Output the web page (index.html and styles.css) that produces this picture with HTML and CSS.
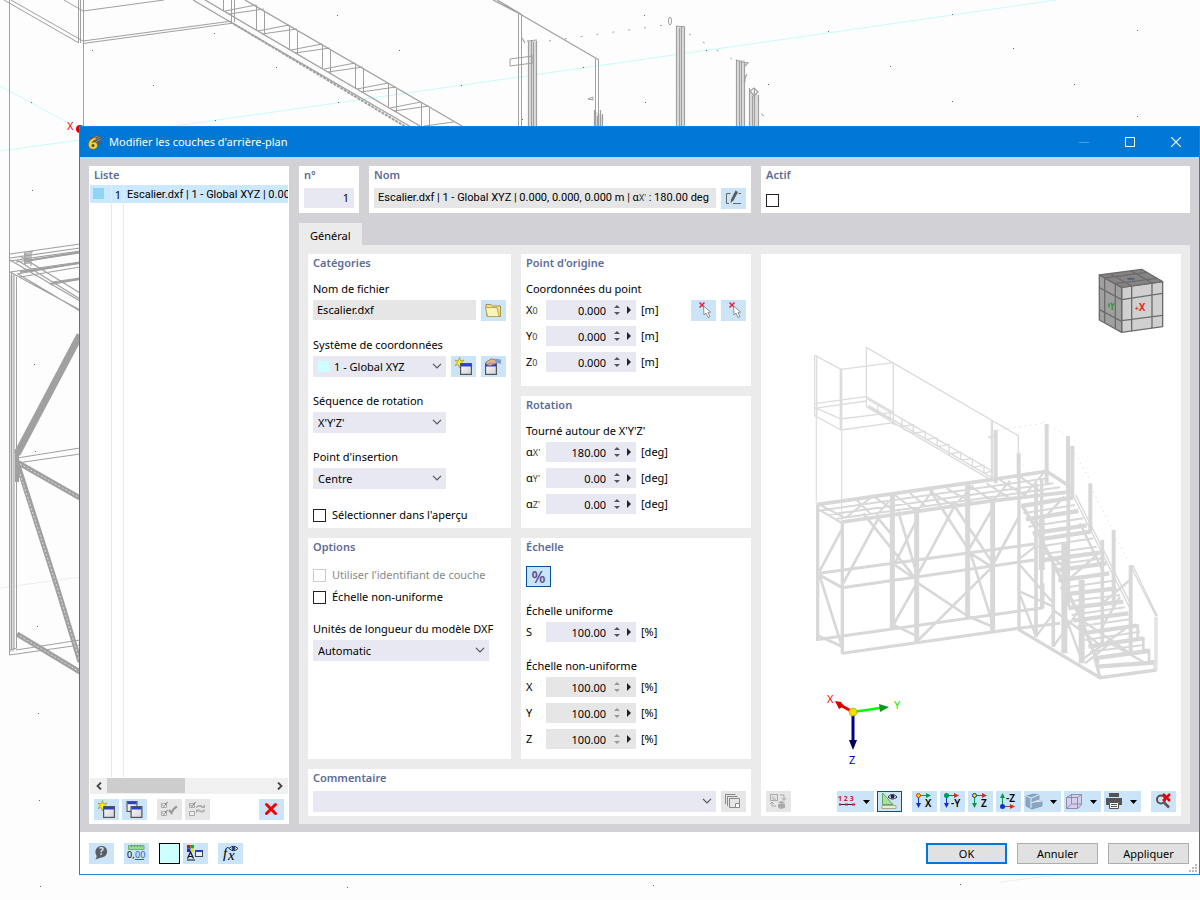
FILE: index.html
```html
<!DOCTYPE html>
<html lang="fr">
<head>
<meta charset="utf-8">
<title>Modifier les couches d'arrière-plan</title>
<link rel="stylesheet" href="styles.css">
</head>
<body>
<svg class="defs" aria-hidden="true">
  <defs>
    <linearGradient id="g-win" x1="0" y1="0" x2="1" y2="1"><stop offset="0" stop-color="#fff"/><stop offset="1" stop-color="#d0d0d6"/></linearGradient>
    <symbol id="chev" viewBox="0 0 10 6"><path d="M1 .8L5 4.8L9 .8" fill="none" stroke="#555" stroke-width="1.2"/></symbol>
    <symbol id="down" viewBox="0 0 7 4"><path d="M0 0H7L3.500 4Z"/></symbol>
    <symbol id="win" viewBox="0 0 12 12"><rect x=".6" y=".6" width="10.800" height="10.800" fill="url(#g-win)" stroke="#555" stroke-width="1.200"/><path d="M1 1H11V3.500H1Z" fill="#2a3fd8"/></symbol>
    <symbol id="i-new" viewBox="0 0 25 21"><path d="M8.500 1.500L9.700 5L13 4L10.800 6.800L13 9.500L9.700 8.600L8.500 12L7.300 8.600L4 9.500L6.200 6.800L4 4L7.300 5Z" fill="#ffee10" stroke="#8a8a30" stroke-width=".6"/><use href="#win" x="9" y="7" width="12" height="12"/></symbol>
    <symbol id="i-copywin" viewBox="0 0 25 21"><use href="#win" x="4" y="2" width="12" height="11"/><use href="#win" x="8" y="7" width="13" height="12"/></symbol>
    <symbol id="i-pick" viewBox="0 0 25 21"><path d="M8.500 2.500L13.500 7.500M13.500 2.500L8.500 7.500" stroke="#e8203a" stroke-width="1.500"/><path d="M12.500 6L13 15L15 13L17 17.500L19 16.500L17 12.500L19.500 12Z" fill="#fff" stroke="#777" stroke-width=".8"/></symbol>
    <g id="baluster"><path d="M223.500 -14V11M231.500 -8V15M192 -8L223 -14M196 -5L231 -10"/></g>
  </defs>
</svg>

<main class="desktop">
  <svg class="scene" viewBox="0 0 1200 900" preserveAspectRatio="xMinYMin slice" aria-hidden="true">
    <g fill="none" stroke="#c8fbfb"><path d="M0 86L76 127M0 151L80 140M175 126L400 94L800 37L1056 0"/></g>
    <path d="M0 588L80 577M1000 882L1060 875" stroke="#eee"/>
    <path d="M528 41H537V126H528ZM676 26H685V126H676ZM736 60H745V126H736ZM750 90L758 95V126H750ZM594 110L602 116V126H594ZM10 275H14V652H10Z" fill="#dedede"/>
    <g fill="none" stroke="#a0a0a0">
      <path d="M9.500 0V655M4 0L79 43M11 0L83 41M64 0L83 11L164 0M83 41L232 21M83 43.500L234 23M78.500 0V43M80.500 0V43M83.500 0V126"/>
      <path d="M193 0L232 23L411 127M205 0L420 126M245 0L462 126" stroke-width="1.300"/>
      <path d="M234 24L406 127" stroke-dasharray="3 1" stroke-width="2"/>
      <path d="M223.500 0V11M231.500 0V22M234.500 0V22"/>
      <use href="#baluster" x="33" y="19"/><use href="#baluster" x="66" y="39"/><use href="#baluster" x="99" y="58"/><use href="#baluster" x="132" y="77"/><use href="#baluster" x="165" y="97"/><use href="#baluster" x="198" y="116"/><path d="M424 126L454 122"/>
      <path d="M493 0L520 14L599 60M497 0L521 14" stroke-width="1.300"/>
      <path d="M518.500 14V126M521.500 14V126M595.500 59V126M598.500 60V126"/>
      <path d="M510 59L533 56V63L510 66ZM588 99L593 97V100Z"/>
      <path d="M528.500 41V126M531.500 40V126M533.500 42V126M536.500 41V126M527 41L537 40M676.500 26V126M679.500 28V126M681.500 26V126M684.500 27V126M676 26L685 27M736.500 60V126M739.500 62V126M741.500 61V126M744.500 62V126M736 60L742 62L748 63L744 67M749.500 88V126M752.500 96V126M754.500 88V126M758.500 95V126M750 91L754 96L758 92L754 88ZM594.500 110V126M597.500 116V126M600.500 110V126M602.500 114V126M522 38L525 43" stroke-width="1.200"/>
      <ellipse cx="670" cy="21" rx="1.500" ry="4"/><path d="M745 75V82M747 74L744 81M761 114L764 116"/>
      <path d="M549 41L665 25M689 34L732 59" stroke-dasharray="2 14"/>
      <g stroke-width="1.200"><path d="M10 254L80 244M10 258L80 248M10 261L80 251M16 262L80 253M10 272L80 262M17 274L80 263M20 277L80 267M10 272L80 310M18 274L80 311M10 260L80 301M17 260L80 299M20 256L80 293M50 284L80 279M52 282L80 278M24 252H33M25 252V265M31 252V266"/></g>
      <path d="M20 272L80 263M50 284L80 279M26 261L80 252" stroke-width="2"/>
      <path d="M27 253V264" stroke-width="6" stroke-opacity=".7"/>
      <path d="M11.500 272V650M14 275V650M16.500 277V648M9.500 655L80 645M16 650L80 640M17 458L80 448M17 463L80 454M10 650L17 648"/>
      <path d="M17 454L80 335" stroke-width="7"/>
      <g stroke-width="5" stroke="#a0a0a0"><path d="M17 462L80 498M17 462L58 590L80 662M17 634L80 672"/></g>
      <g stroke="#ddd" stroke-dasharray="2 2"><path d="M20 464L80 498M20 474L58 590L80 662M20 636L80 672"/></g>
      <path d="M17 449V482" stroke-width="4"/>
    </g>
    <g fill="#666"><path d="M92 50h1v1h-1zM31 102h1v1h-1zM214 33h1v1h-1zM153 85h1v1h-1zM276 67h1v1h-1zM337 15h1v1h-1zM338 102h1v1h-1zM215 120h1v1h-1zM32 190h1v1h-1zM399 50h1v1h-1zM461 85h1v1h-1zM583 67h1v1h-1zM644 15h1v1h-1zM706 50h1v1h-1zM645 102h1v1h-1zM522 119h1v1h-1zM768 84h1v1h-1zM828 31h1v1h-1zM890 66h1v1h-1zM952 14h1v1h-1zM952 101h1v1h-1zM1013 48h1v1h-1zM1074 84h1v1h-1zM1137 30h1v1h-1zM1137 116h1v1h-1zM34 364h1v1h-1zM35 451h1v1h-1zM37 626h1v1h-1zM38 713h1v1h-1zM39 800h1v1h-1zM40 886h1v1h-1zM347 887h1v1h-1zM653 885h1v1h-1zM960 884h1v1h-1z"/></g>
    <text x="67" y="130" class="axis" fill="#f00">X</text><circle cx="80" cy="129" r="4" fill="#d00"/>
  </svg>

  <section class="dialog" role="dialog" aria-labelledby="dlg-title">
    <header class="titlebar">
      <svg class="logo" viewBox="0 0 16 16"><path d="M3 4L9 1L15 3L13 12L8 8L3 6Z" fill="#555a66"/><path d="M6 4L11 2M8 6L13 3M9 8L14 5" stroke="#9ab" stroke-width=".7"/><path d="M9 3.500C3 4.500 1.500 8 1.500 11C1.500 16.500 10.500 16.500 10.500 11.500C10.500 8 7 7 5 8.800C5.500 7 7 6 9 5.800Z" fill="#ffd22e" stroke="#7a5c10" stroke-width=".5"/><circle cx="6" cy="11.500" r="1.500" fill="#4a4a40"/></svg>
      <h1 id="dlg-title">Modifier les couches d'arrière-plan</h1>
      <div class="winbtns">
        <button aria-label="Réduire" disabled><svg viewBox="0 0 10 10"><path d="M0 5.500H10" stroke="#4b9fe2"/></svg></button>
        <button aria-label="Agrandir"><svg viewBox="0 0 10 10"><path d="M.5 .5H9.500V9.500H.5Z" fill="none" stroke="#fff"/></svg></button>
        <button aria-label="Fermer"><svg viewBox="0 0 10 10"><path d="M0 0L10 10M10 0L0 10" stroke="#fff" stroke-width="1.200"/></svg></button>
      </div>
    </header>

    <div class="body">
      <aside class="panel list">
        <h2>Liste</h2>
        <ul class="rows">
          <li class="row"><span class="cell-sw"><i></i></span><span class="cell-no">1</span><span class="cell-name">Escalier.dxf | 1 - Global XYZ | 0.000, 0.000, 0.000 m</span></li>
          <li class="row rest"><span class="cell-sw"></span><span class="cell-no"></span><span class="cell-name"></span></li>
        </ul>
        <div class="scroll">
          <button aria-label="Défiler à gauche"><svg viewBox="0 0 8 8"><path d="M6 .5L2.500 4L6 7.500" fill="none" stroke="#444" stroke-width="1.800"/></svg></button>
          <div class="track"><div class="thumb"></div></div>
          <button aria-label="Défiler à droite"><svg viewBox="0 0 8 8"><path d="M2 .5L5.500 4L2 7.500" fill="none" stroke="#444" stroke-width="1.800"/></svg></button>
        </div>
        <div class="tools">
          <button class="ib" aria-label="Nouveau"><svg><use href="#i-new"/></svg></button>
          <button class="ib" aria-label="Copier"><svg><use href="#i-copywin"/></svg></button>
          <button class="ib off lead" aria-label="Tout sélectionner" disabled><svg viewBox="0 0 25 21"><path d="M4.500 4.500H9.500V8.500H4.500ZM4.500 12.500H9.500V16.500H4.500Z" fill="#fff" stroke="#aaa"/><path d="M5 5.500L7 7.500L10.500 3M5 13.500L7 15.500L10.500 11" fill="none" stroke="#777"/><path d="M12 11L14.500 14Q16 9.500 20 7.500" fill="none" stroke="#999" stroke-width="2"/></svg></button>
          <button class="ib off" aria-label="Inverser la sélection" disabled><svg viewBox="0 0 25 21"><path d="M4.500 4.500H9.500V8.500H4.500ZM4.500 12.500H9.500V16.500H4.500Z" fill="#eee" stroke="#aaa"/><path d="M5 5.500L7 7.500L10.500 3" fill="none" stroke="#777"/><path d="M11 8.500Q14 5.500 17.500 8M20 11Q17 14 13.500 11.500" fill="none" stroke="#aaa" stroke-width="1.500"/><path d="M16 9L20 9V5.500ZM11 10.500L15 10.500L11 14Z" fill="#aaa"/></svg></button>
          <button class="ib del" aria-label="Supprimer"><svg viewBox="0 0 25 21"><path d="M7.500 5.500L16.500 14.500M16.500 5.500L7.500 14.500" stroke="#f00000" stroke-width="3" stroke-linecap="round"/></svg></button>
        </div>
      </aside>

      <div class="content">
        <div class="head">
          <section class="panel"><h2><label for="no">n°</label></h2><input id="no" class="field num-no" value="1"></section>
          <section class="panel"><h2>Nom</h2>
            <div class="line"><output class="field ro">Escalier.dxf | 1 - Global XYZ | 0.000, 0.000, 0.000 m | α<small>X'</small> : 180.00 deg</output>
            <button class="ib" aria-label="Modifier le nom"><svg viewBox="0 0 25 21"><path d="M9.500 5.500H5.500V15.500H8M17.500 5.500H20M12 15.500H20" fill="none" stroke="#666"/><path d="M9.500 15L10 11.500L14.500 2.500L17 4L12.500 12.500Z" fill="#5a5a5a"/></svg></button></div>
          </section>
          <section class="panel"><h2><label for="actif">Actif</label></h2><input type="checkbox" id="actif"></section>
        </div>
        <nav class="tabs"><button class="tab" aria-current="page">Général</button></nav>

        <div class="page">
          <section class="panel cat">
            <h2>Catégories</h2>
            <div class="stack">
              <div class="fg"><label for="file">Nom de fichier</label>
                <div class="line"><input id="file" class="field ro" value="Escalier.dxf" readonly>
                <button class="ib" aria-label="Parcourir"><svg viewBox="0 0 25 21"><path d="M5 7V4.500H10L11.500 6H19.500V16.500H6Z" fill="#efe08c" stroke="#a89440"/><path d="M4.500 7.500H16L18 16.500H6.500Z" fill="#fbf3bb" stroke="#b8a650"/></svg></button></div></div>
              <div class="fg"><label for="cs">Système de coordonnées</label>
                <div class="line"><div class="sel w133 sw"><i></i><select id="cs"><option>1 - Global XYZ</option></select><svg><use href="#chev"/></svg></div>
                <button class="ib" aria-label="Nouveau système"><svg><use href="#i-new"/></svg></button>
                <button class="ib end" aria-label="Modifier le système"><svg viewBox="0 0 25 21"><use href="#win" x="4" y="7" width="12" height="12"/><path d="M5 6L10 3L14 3.500L16 7L12 8.500L9 10L5 8Z" fill="#d8b49a" stroke="#8d6c58" stroke-width=".8"/><path d="M7 8.500L10 6.500M9.500 9L12 6.500" stroke="#8d6c58" stroke-width=".6"/><path d="M14 2.500L20 3.500V8L15 6.500Z" fill="#7f9fd0"/></svg></button></div></div>
              <div class="fg"><label for="seq">Séquence de rotation</label>
                <div class="sel w133"><select id="seq"><option>X'Y'Z'</option></select><svg><use href="#chev"/></svg></div></div>
              <div class="fg"><label for="ins">Point d'insertion</label>
                <div class="sel w133"><select id="ins"><option>Centre</option></select><svg><use href="#chev"/></svg></div></div>
              <label class="ck"><input type="checkbox">Sélectionner dans l'aperçu</label>
            </div>
          </section>

          <div class="mid">
            <section class="panel grow">
              <h2>Point d'origine</h2>
              <div class="origin">
              <div class="fg"><span>Coordonnées du point</span>
                <div class="nums">
                  <div class="nr"><label for="x0">X<small>0</small></label><div class="num"><input id="x0" value="0.000"><span class="spin"><button aria-label="Plus"></button><button aria-label="Moins"></button></span><button class="more" aria-label="Options"></button></div><span>[m]</span></div>
                  <div class="nr"><label for="y0">Y<small>0</small></label><div class="num"><input id="y0" value="0.000"><span class="spin"><button aria-label="Plus"></button><button aria-label="Moins"></button></span><button class="more" aria-label="Options"></button></div><span>[m]</span></div>
                  <div class="nr"><label for="z0">Z<small>0</small></label><div class="num"><input id="z0" value="0.000"><span class="spin"><button aria-label="Plus"></button><button aria-label="Moins"></button></span><button class="more" aria-label="Options"></button></div><span>[m]</span></div>
                </div></div>
                <div class="picks"><button class="ib" aria-label="Choisir un point"><svg><use href="#i-pick"/></svg></button><button class="ib" aria-label="Choisir un nœud"><svg><use href="#i-pick"/></svg></button></div>
              </div>
            </section>
            <section class="panel grow">
              <h2>Rotation</h2>
              <div class="fg"><span>Tourné autour de X'Y'Z'</span>
                <div class="nums">
                  <div class="nr"><label for="ax">α<small>X'</small></label><div class="num"><input id="ax" value="180.00"><span class="spin"><button aria-label="Plus"></button><button aria-label="Moins"></button></span><button class="more" aria-label="Options"></button></div><span>[deg]</span></div>
                  <div class="nr"><label for="ay">α<small>Y'</small></label><div class="num"><input id="ay" value="0.00"><span class="spin"><button aria-label="Plus"></button><button aria-label="Moins"></button></span><button class="more" aria-label="Options"></button></div><span>[deg]</span></div>
                  <div class="nr"><label for="az">α<small>Z'</small></label><div class="num"><input id="az" value="0.00"><span class="spin"><button aria-label="Plus"></button><button aria-label="Moins"></button></span><button class="more" aria-label="Options"></button></div><span>[deg]</span></div>
                </div></div>
            </section>
          </div>

          <section class="panel opt">
            <h2>Options</h2>
            <div class="checks">
              <label class="ck dis"><input type="checkbox" disabled>Utiliser l'identifiant de couche</label>
              <label class="ck"><input type="checkbox">Échelle non-uniforme</label>
            </div>
            <div class="fg"><label for="unit">Unités de longueur du modèle DXF</label>
              <div class="sel w176"><select id="unit"><option>Automatic</option></select><svg><use href="#chev"/></svg></div></div>
          </section>

          <section class="panel scale">
            <h2>Échelle</h2>
            <button class="ib on pct">%</button>
            <div class="stack">
              <div class="fg"><span>Échelle uniforme</span>
                <div class="nr"><label for="s">S</label><div class="num"><input id="s" value="100.00"><span class="spin"><button aria-label="Plus"></button><button aria-label="Moins"></button></span><button class="more" aria-label="Options"></button></div><span>[%]</span></div></div>
              <div class="fg"><span>Échelle non-uniforme</span>
                <div class="nums">
                  <div class="nr"><label for="sx">X</label><div class="num dis"><input id="sx" value="100.00" readonly><span class="spin"><button aria-label="Plus"></button><button aria-label="Moins"></button></span><button class="more" aria-label="Options"></button></div><span>[%]</span></div>
                  <div class="nr"><label for="sy">Y</label><div class="num dis"><input id="sy" value="100.00" readonly><span class="spin"><button aria-label="Plus"></button><button aria-label="Moins"></button></span><button class="more" aria-label="Options"></button></div><span>[%]</span></div>
                  <div class="nr"><label for="sz">Z</label><div class="num dis"><input id="sz" value="100.00" readonly><span class="spin"><button aria-label="Plus"></button><button aria-label="Moins"></button></span><button class="more" aria-label="Options"></button></div><span>[%]</span></div>
                </div></div>
            </div>
          </section>

          <section class="panel comment">
            <h2><label for="com">Commentaire</label></h2>
            <div class="line"><div class="sel wide"><select id="com"><option></option></select><svg><use href="#chev"/></svg></div>
            <button class="ib off" aria-label="Copier le commentaire" disabled><svg viewBox="0 0 25 21"><path d="M4.500 13V3.500H14.500M6.500 15V5.500H16.500" fill="none" stroke="#888"/><path d="M8.500 7.500H18.500V16.500H8.500Z" fill="none" stroke="#888"/><path d="M14.500 12.500H18.500V16.500H14.500Z" fill="#fff" stroke="#888"/></svg></button></div>
          </section>

          <section class="panel preview">
            <svg class="model" viewBox="761 254 420 537" role="img" aria-label="Aperçu du modèle">
              <g transform="translate(760 250) scale(.33333)">
                <g fill="none" stroke="#dcdcdc" stroke-width="4">
                  <path d="M164 316V497L243 540M170 316V497M165 316L243 358M243 358L400 338M400 338V518L243 540M319 292V470M319 292L775 557V620M163 461L319 440L400 487L243 507L163 472M163 475L319 453"/>
                  <path d="M243 356V540" stroke-width="8"/>
                  <path d="M319 445L700 665M319 470L690 688M325 466L695 683M354 462V488L325 470M390 484V508L354 488M426 504V530L395 520M426 530L460 524V550L430 538M460 550L496 544V568M496 568L532 564V590M532 590L567 584V612M567 612L602 606V630M602 630L637 626V652M637 652L672 646V672M672 670L700 662"/>
                  <path d="M169 497V760M245 540V820" stroke="#e0e0e0"/>
                  <path d="M696 512V690M685 562L707 558" stroke-width="7"/>
                  <path d="M715 540L850 520M868 528L918 556M945 610L990 690M780 630L797 658M1000 725L1058 840M1068 865L1106 935M850 514L855 522" stroke-dasharray="4 12" stroke-width="3"/>
                </g>
                <g fill="none" stroke="#d8d8d8">
                  <g stroke-width="12"><path d="M707 540V700M860 522V700M924 558V730M937 588V740M991 700V845M1061 840V1070M1112 945V1210M776 610V690"/></g>
                  <g stroke-width="11"><path d="M170 764L700 688L860 664L940 716M247 816L470 784L700 752L935 725"/></g>
                  <g stroke-width="6"><path d="M175 782L860 685M200 795L880 700M230 806L900 712M170 775L247 820M180 765L260 806M290 750L330 790M345 742L400 780M400 732L470 785M450 730L500 770M510 725L585 770M560 715L640 760M625 705L700 755M680 700L750 745M720 690L800 740M780 680L850 730M255 805L330 745M350 795L400 740M470 784L520 722M580 770L640 706M700 752L750 692M790 740L850 670"/></g>
                  <path d="M173 765V1173M247 820V1213M777 690V1140M845 690V1075" stroke-width="10"/>
                  <path d="M397 735V1135M470 775V1180M623 700V1102M698 745V1147" stroke-width="15"/>
                  <path d="M178 970L823 882M247 1013L823 930M178 1168L850 1073M247 1210L775 1135L900 1120M170 1155L247 1190M178 975L247 1013" stroke-width="9"/>
                  <path d="M178 965L247 835M178 975L243 1180M247 1005L355 805M310 790L470 990M350 800L400 860M405 945L470 990M470 1000L400 1125L475 1160M470 980L585 765M415 785L470 970M470 810L405 940M510 720L623 895M585 770L698 940M698 775L623 905L698 952M630 905L698 1120M698 950L475 1170M475 1000L623 1098L698 1130M777 800L698 945" stroke-width="8"/>
                  <path d="M828 700V1160M880 940V1190M925 720V1070M1027 870V1190" stroke-width="11"/>
                  <path d="M845 810V960M913 880V1210M965 990V1240" stroke-width="18"/>
                  <path d="M775 1138L1020 1283L1190 1260M785 765L825 830L880 940L960 1100L1015 1240M1020 1283L1005 1225" stroke-width="10"/>
                  <g stroke-width="13"><path d="M785 768L940 742M798 808L955 783M818 850L980 826M838 868L992 845M850 930L1020 908M880 962L1040 940M895 992L1048 970M905 1034L1070 1015M925 1074L1090 1055M940 1112L1105 1090M965 1150L1130 1127M985 1190L1148 1165M1000 1225L1165 1203M1010 1250L1182 1238"/></g>
                  <g stroke-width="6"><path d="M790 790L945 765M805 830L970 805M835 890L1000 865M850 912L1010 890M875 945L1030 925M900 1015L1060 992M915 1055L1080 1035M935 1095L1095 1072M950 1130L1110 1108M975 1170L1140 1145M990 1205L1150 1185"/></g>
                  <path d="M780 925L825 890M780 945L880 1060M780 1025L880 1070M780 1035L828 1160M828 1160L880 1090M880 1190L965 1070M913 1090L965 1230M880 1080L1027 1190M965 1110L1110 1210M1027 1060L1110 990M913 1000L1027 900M828 830L913 740M850 900L925 960M965 1230L1105 1130M1027 1130L1080 1040M850 1075L850 1000M960 820L1027 960M975 1240L1050 1180L1150 1235" stroke-width="7"/>
                  <path d="M1110 1127H1133V1165H1150V1200H1167V1235H1185V1260" stroke-width="8"/>
                  <path d="M940 738L1110 1075M947 735L1116 1070M1112 948L1188 1098M1118 946L1192 1098" stroke-width="4"/>
                  <path d="M1188 1100V1260" stroke-width="10" stroke="#e2e2e2"/>
                </g>
                <g stroke="#6f6b6b" stroke-width="4" stroke-linejoin="round">
                  <path d="M1085 112L1208 95V230L1085 247Z" fill="#d0d0d0"/><path d="M1018 75L1085 112V247L1018 210Z" fill="#a0a0a0"/><path d="M1018 75L1145 58L1208 95L1085 112Z" fill="#858585"/>
                  <path d="M1034 84V219M1066 101V237M1018 113L1085 149M1018 179L1085 214M1115 108V243M1176 99V234M1085 149L1208 130M1085 212L1208 196M1034 84L1160 67M1066 101L1192 85M1050 71L1115 108M1112 62L1176 99" fill="none"/>
                </g>
                <ellipse cx="1113" cy="86" rx="12" ry="3" fill="#55598a"/>
                <text x="1124" y="184" class="cube">+<tspan class="cube-x">X</tspan></text><path d="M1046 160L1048 172M1053 158L1057 168L1062 160M1057 167V180" fill="none" stroke="#3a9a3f" stroke-width="5"/>
              </g>
              <path d="M853 712L842 706" stroke="#e00" stroke-width="3"/><path d="M835 701L839 709L844 706L841 702Z" fill="#d00"/>
              <path d="M853 712L880 708" stroke="#0f0" stroke-width="2.500"/><path d="M879 704L889 707L880 712Z" fill="#0a9a18"/>
              <path d="M853 712V741" stroke="#00008b" stroke-width="3"/><path d="M849 740H857L853 750Z" fill="#00005a"/>
              <circle cx="853" cy="712" r="4" fill="#f0e000" stroke="#a8a000" stroke-width=".6"/>
              <text class="axis" x="827" y="703" fill="#f00">X</text><text class="axis" x="894" y="709" fill="#0e0">Y</text><text class="axis" x="849" y="764" fill="#00a">Z</text>
            </svg>
            <div class="vt">
              <button class="ib off" aria-label="Changer de modèle" disabled><svg viewBox="0 0 25 21"><path d="M4.500 3.500H11.500V9.500H4.500ZM7 5V8H10" fill="none" stroke="#aaa"/><path d="M14 4H18V9M16 7L18 9.500L20 7M6 11V15H10M4 13L6 11L8 13" fill="none" stroke="#aaa"/><path d="M12 11L16 10L19 12L15 13ZM12 13L19 13V17L14 18L12 16Z" fill="#aaa"/></svg></button>
              <div class="vg">
                <button class="ib dd" aria-label="Numérotation"><svg viewBox="0 0 25 21"><text x="1" y="10" class="t123">1 2 3</text><path d="M3 13.500H17" stroke="#224"/><path d="M2 13.500h2m4 0h3m4 0h3" stroke="#e01030" stroke-width="2"/></svg><svg class="d"><use href="#down"/></svg></button>
                <button class="ib on" aria-label="Dimensions"><svg viewBox="0 0 25 21"><path d="M5.500 2V13.500H16Z" fill="#a8e0a0" stroke="#60a860"/><path d="M5 14.500H19V17.500H5Z" fill="#f0e8d0" stroke="#998" stroke-width=".8"/><path d="M11 6Q15.500 1 20 6Q15.500 10 11 6Z" fill="#fff" stroke="#224"/><circle cx="15.500" cy="5.500" r="2" fill="#224"/></svg></button>
              </div>
              <div class="vg">
                <button class="ib" aria-label="Vue X"><svg viewBox="0 0 25 21"><path d="M8 4.500H16" stroke="#009a4a"/><path d="M14 2L19 4.500L14 7Z" fill="#009a4a"/><path d="M6.500 6V14" stroke="#1030d0"/><path d="M4 12H9L6.500 17Z" fill="#1030d0"/><circle cx="6.500" cy="4.500" r="2" fill="#ffd800" stroke="#d03010"/><text x="13" y="16" class="vx">X</text></svg></button>
                <button class="ib" aria-label="Vue -Y"><svg viewBox="0 0 25 21"><path d="M8 4.500H16" stroke="#d03010"/><path d="M14 2L19 4.500L14 7Z" fill="#d03010"/><path d="M6.500 6V14" stroke="#1030d0"/><path d="M4 12H9L6.500 17Z" fill="#1030d0"/><circle cx="6.500" cy="4.500" r="2.500" fill="#009a4a"/><text x="11" y="16" class="vx">-Y</text></svg></button>
                <button class="ib" aria-label="Vue Z"><svg viewBox="0 0 25 21"><path d="M8 4.500H16" stroke="#d03010"/><path d="M14 2L19 4.500L14 7Z" fill="#d03010"/><path d="M6.500 6V14" stroke="#009a4a"/><path d="M4 12H9L6.500 17Z" fill="#009a4a"/><circle cx="6.500" cy="4.500" r="2" fill="#ffd800" stroke="#1030d0"/><text x="13" y="16" class="vx">Z</text></svg></button>
                <button class="ib" aria-label="Vue -Z"><svg viewBox="0 0 25 21"><path d="M8 15.500H16" stroke="#d03010"/><path d="M14 13L19 15.500L14 18Z" fill="#d03010"/><path d="M6.500 6V14" stroke="#009a4a"/><path d="M4 7H9L6.500 2Z" fill="#009a4a"/><circle cx="6.500" cy="15.500" r="2.500" fill="#1030d0"/><text x="10" y="11" class="vx">-Z</text></svg></button>
                <button class="ib dd" aria-label="Affichage"><svg viewBox="0 0 25 21"><path d="M2 5L10 3L15 4V9L10 11L18 10V15L8 18L2 15Z" fill="#8aa6c4" stroke="#7590b0" stroke-width=".7"/><path d="M2 5L7 7L15 4M7 7V17M10 11L18 10M7 12L15 9" fill="none" stroke="#dcebf8"/></svg><svg class="d"><use href="#down"/></svg></button>
                <button class="ib dd" aria-label="Boîte"><svg viewBox="0 0 25 21"><path d="M2.500 6.500L7.500 3.500H17.500V14L13.500 17.500H2.500Z" fill="#d4d0ea" stroke="#8a84a8" stroke-width=".9"/><path d="M2.500 6.500H13.500V17.500M13.500 6.500L17.500 3.500M7.500 3.500V13L2.500 17.500M7.500 13H17.500" fill="none" stroke="#8a84a8" stroke-width=".9"/></svg><svg class="d"><use href="#down"/></svg></button>
                <button class="ib dd" aria-label="Imprimer"><svg viewBox="0 0 25 21"><path d="M5 2H15V6H5Z M2 7H18V14H15V11H5V14H2Z" fill="#555"/><path d="M5.500 11.500H14.500V17.500H5.500Z" fill="#fff" stroke="#555"/><path d="M7 13.500H13M7 15.500H13" stroke="#555"/></svg><svg class="d"><use href="#down"/></svg></button>
              </div>
              <button class="ib" aria-label="Réinitialiser la vue"><svg viewBox="0 0 25 21"><circle cx="10" cy="8.500" r="4" fill="none" stroke="#555" stroke-width="2"/><path d="M13 11.500L18 16.500" stroke="#555" stroke-width="2.500"/><path d="M12 3L19 10M19 3L12 10" stroke="#f00000" stroke-width="2.500"/></svg></button>
            </div>
          </section>
        </div>
      </div>
    </div>

    <footer class="foot">
      <button class="ib" aria-label="Aide"><svg viewBox="0 0 25 21"><path d="M12.500 3C20 3 20 14 12.500 14.500C11 14.500 9 16 6 16.500C8 15 7.500 13.500 7.500 12.500C5 9 7 3 12.500 3Z" fill="#5d5d5d"/><text x="10" y="12" class="q">?</text></svg></button>
      <button class="ib g10" aria-label="Unités"><svg viewBox="0 0 25 21"><path d="M4.500 2.500H20V6.500H4.500Z" fill="#98d890" stroke="#70b068"/><path d="M7.500 2V4M10.500 2V4M13.500 2V4M16.500 2V4" stroke="#5a9a52"/><text x="3" y="15" class="u0">0,</text><text x="11" y="15" class="u1">00</text><path d="M11 16.500H20" stroke="#2a5ad8"/></svg></button>
      <button class="color g10" aria-label="Couleur"></button>
      <button class="ib g3" aria-label="Affichage des textes"><svg viewBox="0 0 25 21"><path d="M4 2H7.500V5.500H4Z" fill="#e01010"/><path d="M7.500 2H11V5.500H7.500Z" fill="#10b010"/><path d="M4 5.500H7.500V9H4Z" fill="#1030e0"/><path d="M7.500 5.500H11V9H7.500Z" fill="#f0e010"/><path d="M4.500 15.500L7.500 9L10.500 15.500M6 13.500H9M4 17H12" fill="none" stroke="#111" stroke-width="1.200"/><rect x="12.500" y="7.500" width="7" height="6" fill="#eee" stroke="#444"/><path d="M12 7H20V9H12Z" fill="#2a3fb8"/></svg></button>
      <button class="ib g10" aria-label="Formules"><svg viewBox="0 0 25 21"><text x="5" y="15" class="fx">f</text><text x="10" y="17" class="fx">x</text><path d="M11 5.500Q15.500 1 20 5.500Q15.500 10 11 5.500Z" fill="#fff" stroke="#224"/><circle cx="15.500" cy="5.500" r="2" fill="#224a90"/></svg></button>
      <div class="acts"><button class="btn ok">OK</button><button class="btn">Annuler</button><button class="btn">Appliquer</button></div>
      <svg class="grip" viewBox="0 0 8 8"><path d="M6 0h2v2H6zM3 3h2v2H3zM6 3h2v2H6zM0 6h2v2H0zM3 6h2v2H3zM6 6h2v2H6z" fill="#bbb"/></svg>
    </footer>
  </section>
</main>
</body>
</html>
```
FILE: styles.css
```css
* { box-sizing: border-box; }
body { margin: 0; font: 11px/18px "Noto Sans", "Open Sans", sans-serif; color: #000; }
button, input, select, output { font: inherit; color: inherit; margin: 0; padding: 0; border: 0; border-radius: 0; background: none; }
h1, h2, ul { margin: 0; padding: 0; font: inherit; list-style: none; }
.defs { position: absolute; width: 0; height: 0; }

.desktop { position: relative; min-height: 100vh; background: #fdfdfd; overflow: hidden; display: flex; padding: 126px 0 25px 79px; }
.scene { position: absolute; inset: 0; width: 100%; height: 100%; }
.axis { font-size: 11px; }

.dialog { position: relative; flex: 1; display: flex; flex-direction: column; border: 1px solid #1883d7; background: #fff; min-width: 0; }
.titlebar { display: flex; align-items: center; height: 30px; background: #0078d7; color: #fff; padding-left: 7px; }
.titlebar h1 { font-size: 11px; margin-left: 6px; }
.logo { width: 16px; height: 16px; }
.winbtns { margin-left: auto; display: flex; }
.winbtns button { width: 46px; height: 30px; display: grid; place-items: center; }
.winbtns svg { width: 10px; height: 10px; }

.body { flex: 1; display: flex; gap: 10px; padding: 9px 9px 8px; background: #d1d1d6; min-height: 0; }
.panel { background: #fff; padding: 0 5px; min-width: 0; }
.panel h2 { font-weight: 600; color: #5c6c96; height: 18px; }

.list { width: 200px; display: flex; flex-direction: column; padding: 0 1px; }
.list h2 { padding-left: 4px; }
.rows { flex: 1; display: flex; flex-direction: column; margin-top: 1px; }
.row { display: flex; height: 18px; background: #cce8ff; line-height: 20px; }
.row.rest { flex: 1; background: none; }
.cell-sw { width: 22px; border-right: 1px solid #e8e8ee; padding: 3px; }
.cell-sw i { display: block; width: 11px; height: 11px; background: #8fd6f4; }
.cell-no { width: 12px; border-right: 1px solid #e8e8ee; text-align: right; padding-right: 2px; }
.cell-name { flex: 1; min-width: 0; overflow: hidden; white-space: nowrap; padding-left: 3px; }
.cell-name, output.field { font-family: Roboto, "Noto Sans", sans-serif; }
.scroll { display: flex; height: 16px; background: #f0f0f0; margin-top: 1px; }
.scroll button { width: 17px; display: grid; place-items: center; }
.scroll svg { width: 8px; height: 8px; }
.track { flex: 1; }
.thumb { width: 78px; height: 15px; background: #cdcdcd; }
.tools { display: flex; gap: 3px; padding: 5px 4px 4px; }
.tools .lead { margin-left: 7px; }
.tools .del { margin-left: auto; }

.ib { width: 25px; height: 21px; background: #cce4f7; flex: none; display: flex; align-items: center; justify-content: center; }
.ib svg { width: 25px; height: 21px; flex: none; display: block; }
.ib.off { background: #e6e6e6; }
.ib.on { border: 1px solid #00549f; }
.ib.dd { width: 37px; justify-content: flex-start; }
.ib svg.d { width: 7px; height: 4px; margin-left: 1px; }

.content { flex: 1; display: flex; flex-direction: column; min-width: 0; }
.head { display: grid; grid-template-columns: 60px 382px 1fr; gap: 10px; }
.head .panel { height: 47px; }
.line { display: flex; gap: 5px; }
.head .line, .head .num-no, .comment .line { margin-top: 4px; }
.field { height: 20px; line-height: 20px; background: #e8e8f2; padding: 0 4px; min-width: 0; overflow: hidden; white-space: nowrap; }
.field.ro { background: #e6e6e6; flex: 1; }
output.field { padding: 0 0 0 4px; }
.num-no { width: 50px; text-align: right; padding-right: 5px; display: block; }
small { font-size: 9px; color: #444; }
input[type=checkbox] { appearance: none; width: 13px; height: 13px; border: 1px solid #222; background: #fff; flex: none; display: block; }
input[type=checkbox]:disabled { border-color: #ccc; }
#actif { margin-top: 10px; }

.tabs { display: flex; margin-top: 10px; }
.tab { background: #ebebeb; height: 22px; padding: 4px 11px 0; line-height: 18px; }
.page { flex: 1; display: grid; grid-template-columns: 203px 230px 1fr; grid-template-rows: 274px 1fr 47px; gap: 10px; padding: 9px 9px 8px; background: #ebebeb; min-height: 0; }
.preview { grid-column: 3; grid-row: 1 / 4; display: flex; flex-direction: column; min-height: 0; padding: 0; }
.comment { grid-column: 1 / 3; grid-row: 3; }
.mid { display: flex; flex-direction: column; gap: 10px; }
.grow { flex: 1; }
.panel h2 + .stack, .panel h2 + .fg, .origin { margin-top: 8px; }
.stack { display: flex; flex-direction: column; gap: 15px; }
.fg { display: flex; flex-direction: column; gap: 2px; }
.sel { position: relative; height: 21px; background: #e8e8f2; }
.sel select { appearance: none; width: 100%; height: 21px; line-height: 21px; padding-left: 5px; display: block; }
.sel svg { position: absolute; right: 4px; top: 7px; width: 10px; height: 6px; pointer-events: none; }
.w133 { width: 133px; }
.w176 { width: 176px; }
.wide { flex: 1; }
.sw i { position: absolute; left: 5px; top: 5px; width: 11px; height: 11px; background: #ccffff; }
.sw select { padding-left: 21px; }
.ck { display: flex; align-items: center; gap: 6px; height: 22px; }
.ck.dis { color: #888; }
.end { margin-left: auto; }
.checks { margin: 8px 0 12px; }

.origin { display: flex; justify-content: space-between; }
.picks { display: flex; gap: 5px; padding-top: 20px; }
.nums { display: flex; flex-direction: column; gap: 6px; }
.nr { display: flex; align-items: center; height: 20px; }
.nr label { width: 20px; }
.nr > span { margin-left: 5px; }
.num { display: flex; align-items: center; width: 90px; height: 20px; background: #e8e8f2; }
.num input { width: 60px; height: 20px; text-align: right; }
.spin { display: flex; flex-direction: column; gap: 4px; margin-left: 8px; color: #555; }
.spin button { width: 0; height: 0; border: solid transparent; border-width: 0 3px 3px; border-bottom-color: currentColor; }
.spin button + button { border-width: 3px 3px 0; border-top-color: currentColor; }
.more { width: 0; height: 0; margin-left: 7px; border: solid transparent; border-width: 4px 0 4px 4px; border-left-color: #222; }
.num.dis { background: #e6e6e6; }
.dis .spin { color: #999; }
.pct { margin: 10px 0 15px; font-weight: 600; font-size: 16px; color: #5a5494; }

.model { flex: 1; min-height: 0; width: 100%; height: 0; display: block; }
.cube { font-size: 22px; font-weight: 700; fill: #e03030; }
.cube-x { font-size: 30px; }
.vt { display: flex; padding: 0 5px 4px; gap: 10px; }
.vt > :first-child { margin-right: auto; }
.vg { display: flex; gap: 3px; }
.t123 { font-size: 7px; font-weight: 700; fill: #e01030; }
.vx { font-size: 10px; font-weight: 600; }
.q { font-size: 10px; font-weight: 700; fill: #cce4f7; }
.u0, .u1 { font-size: 9px; }
.u1 { fill: #2a5ad8; }
.fx { font: italic 15px "Liberation Serif", serif; }

.foot { position: relative; display: flex; align-items: center; height: 42px; padding: 0 10px 0 9px; }
.g10 { margin-left: 10px; }
.g3 { margin-left: 3px; }
.color { width: 21px; height: 21px; background: #ccffff; border: 1px solid #000; }
.acts { margin-left: auto; display: flex; gap: 10px; }
.btn { width: 81px; height: 21px; background: #e1e1e1; border: 1px solid #adadad; line-height: 19px; }
.btn.ok { border: 2px solid #0078d7; line-height: 17px; }
.grip { position: absolute; right: 2px; bottom: 2px; width: 8px; height: 8px; }
```
